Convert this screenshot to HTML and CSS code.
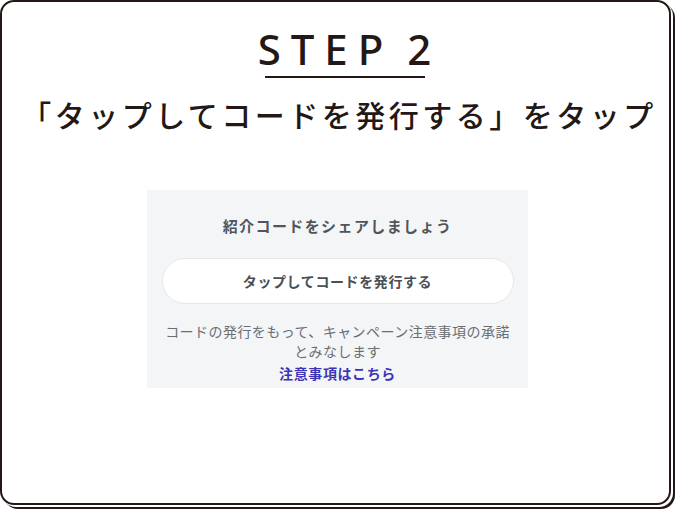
FILE: index.html
```html
<!DOCTYPE html>
<html lang="ja">
<head>
<meta charset="utf-8">
<link rel="stylesheet" href="styles.css">
</head>
<body>
<div class="card">
  <h1 class="step">STEP<span class="num">2</span></h1>
  <div class="rule"></div>
  <p class="lead">「タップしてコードを発行する」をタップ</p>
  <div class="shot">
    <div class="shot-title">紹介コードをシェアしましょう</div>
    <div class="pill">タップしてコードを発行する</div>
    <p class="note">コードの発行をもって、キャンペーン注意事項の承諾<br>とみなします</p>
    <div class="link">注意事項はこちら</div>
  </div>
</div>
</body>
</html>
```
FILE: styles.css
```css
html, body {
  margin: 0;
  padding: 0;
  background: #fff;
}
body {
  width: 676px;
  height: 511px;
  overflow: hidden;
  font-family: "Noto Sans CJK JP", "Noto Sans", sans-serif;
  color: #231815;
}
.card {
  box-sizing: border-box;
  width: 671px;
  height: 505px;
  padding-left: 4px;
  border: 2px solid #231815;
  border-radius: 14px;
  background: #fff;
  box-shadow: 2px 2px 0 0 #fff, 4px 4px 0 0 #231815;
  display: flex;
  flex-direction: column;
  align-items: center;
}
.step {
  margin: 22px 0 0 24px;
  font-family: "Noto Sans", sans-serif;
  font-weight: 500;
  font-size: 42px;
  line-height: 50px;
  letter-spacing: 10px;
  color: #231815;
}
.num {
  margin-left: 14px;
}
.rule {
  width: 160px;
  height: 2px;
  background: #231815;
  margin: 2px 0 0 14px;
}
.lead {
  margin: 16px 0 0 3px;
  font-size: 30px;
  line-height: 40px;
  letter-spacing: 3.5px;
  font-weight: 500;
  color: #231815;
}
.shot {
  margin-top: 56px;
  width: 381px;
  height: 198px;
  background: #f4f5f7;
  box-sizing: border-box;
  padding-top: 26px;
  display: flex;
  flex-direction: column;
  align-items: center;
  font-family: "Noto Sans CJK JP", sans-serif;
}
.shot-title {
  font-size: 15px;
  line-height: 20px;
  font-weight: 700;
  color: #50555b;
  letter-spacing: 1.4px;
}
.pill {
  margin-top: 22px;
  width: 352px;
  height: 46px;
  box-sizing: border-box;
  background: #fff;
  border: 1px solid #e6e7ea;
  border-radius: 23px;
  display: flex;
  align-items: center;
  justify-content: center;
  font-size: 14px;
  font-weight: 700;
  letter-spacing: 0.6px;
  color: #4a4f55;
}
.note {
  margin: 17px 0 0;
  font-size: 14px;
  line-height: 20px;
  color: #6a6e73;
  text-align: center;
  letter-spacing: 0.45px;
}
.link {
  margin-top: 2px;
  font-size: 14px;
  line-height: 20px;
  font-weight: 700;
  letter-spacing: 0.6px;
  color: #3c34b4;
}
```
